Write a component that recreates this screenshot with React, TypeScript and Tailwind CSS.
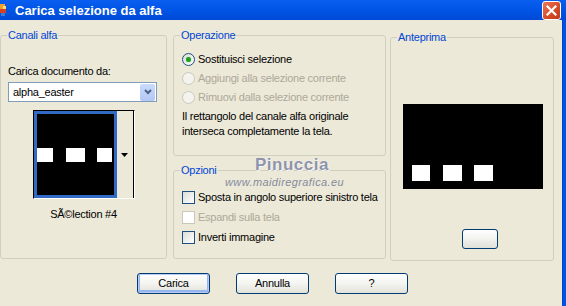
const font = "font-['Liberation_Sans','Arial',sans-serif]";

function GroupBox({
  label,
  className,
  children,
}: {
  label: string;
  className: string;
  children?: React.ReactNode;
}) {
  return (
    <div className={`rounded-[3px] border border-[#d0d0bf] ${className}`}>
      <span className="-mt-[8px] ml-[6px] block w-fit bg-[#ece9d8] px-[1px] text-[11px] leading-[14px] tracking-[-0.25px] text-[#0046d5]">
        {label}
      </span>
      {children}
    </div>
  );
}

function Radio({ label, checked, disabled }: { label: string; checked?: boolean; disabled?: boolean }) {
  return (
    <div className="flex h-[19px] items-center gap-[3px] pl-[8px]">
      <span
        className={`flex h-[13px] w-[13px] items-center justify-center rounded-full border ${
          disabled
            ? "border-[#cac8bb] bg-[#f4f3ee]"
            : "border-[#1c5180] bg-gradient-to-br from-[#dcdcd7] to-white"
        }`}
      >
        {checked && <span className="h-[5px] w-[5px] rounded-full bg-[#21a121] shadow-[0_0_1px_#5fd05f]" />}
      </span>
      <span className={disabled ? "text-[#aca899]" : "text-black"}>{label}</span>
    </div>
  );
}

function Check({ label, disabled }: { label: string; disabled?: boolean }) {
  return (
    <div className="flex h-[20px] items-center gap-[3px] pl-[8px]">
      <span
        className={`h-[13px] w-[13px] border ${
          disabled
            ? "border-[#cac8bb] bg-white"
            : "border-[#1c5180] bg-gradient-to-br from-[#dcdcd7] to-white"
        }`}
      />
      <span className={disabled ? "text-[#aca899]" : "text-black"}>{label}</span>
    </div>
  );
}

function Button({ label, isDefault }: { label: string; isDefault?: boolean }) {
  return (
    <button
      className={`flex h-[21px] w-[73px] items-center justify-center rounded-[3px] border border-[#003c74] bg-gradient-to-b from-white via-[#f4f4f0] to-[#e3e2da] text-[11px] text-black ${
        isDefault ? "shadow-[inset_0_0_0_1px_#b8ccf3,inset_0_-1px_0_2px_#94b5ef]" : ""
      }`}
    >
      {label}
    </button>
  );
}

export default function App() {
  return (
    <div className={`flex h-[306px] w-[566px] flex-col overflow-hidden bg-[#ece9d8] text-[11px] tracking-[-0.25px] ${font}`}>
      {/* Title bar */}
      <div className="flex h-[20px] items-center bg-gradient-to-b from-[#0a5ef0] via-[#0055e5] to-[#0049d6]">
        <svg width="8" height="14" viewBox="0 0 8 14" className="mr-[7px] shrink-0">
          <rect x="0" y="1" width="5" height="5" fill="#f0a030" />
          <rect x="0" y="6" width="6" height="4" fill="#d84020" />
          <rect x="1" y="10" width="4" height="3" fill="#3a7ad8" />
          <rect x="3" y="3" width="3" height="3" fill="#f6e070" />
        </svg>
        <span className="pt-[1px] text-[13px] font-bold tracking-normal text-white">Carica selezione da alfa</span>
        <div className="ml-auto mr-[5px] flex h-[19px] w-[19px] items-center justify-center rounded-[3px] border border-white bg-gradient-to-br from-[#e8795a] via-[#d9502a] to-[#c23a14]">
          <svg width="11" height="11" viewBox="0 0 11 11">
            <path d="M1.5 1.5 L9.5 9.5 M9.5 1.5 L1.5 9.5" stroke="white" strokeWidth="2.2" strokeLinecap="square" />
          </svg>
        </div>
      </div>

      <div className="flex flex-1">
        <div className="flex w-[562px] flex-col">
          <div className="flex items-start pt-[15px]">
            {/* Canali alfa */}
            <GroupBox label="Canali alfa" className="flex h-[224px] w-[167px] flex-col">
              <div className="mt-[22px] pl-[7px] leading-[14px]">Carica documento da:</div>
              <div className="ml-[7px] mt-[4px] flex h-[20px] w-[149px] items-center border border-[#7f9db9] bg-white">
                <span className="flex-1 pl-[4px]">alpha_easter</span>
                <span className="mr-[1px] flex h-[17px] w-[15px] items-center justify-center rounded-[2px] bg-gradient-to-b from-[#c9dafc] to-[#b4c8f6]">
                  <svg width="8" height="6" viewBox="0 0 8 6">
                    <path d="M1 1 L4 4 L7 1" stroke="#4d6185" strokeWidth="2" fill="none" />
                  </svg>
                </span>
              </div>
              <div className="mx-auto mt-[8px] flex h-[89px] w-[102px] border border-black border-b-white border-r-white bg-[#ece9d8]">
                <div className="flex w-[83px] items-center overflow-hidden border-[3px] border-[#316ac5] bg-black">
                  <span className="h-[14px] w-[16px] bg-white" />
                  <span className="ml-[13px] h-[14px] w-[19px] bg-white" />
                  <span className="ml-[12px] h-[14px] w-[15px] shrink-0 bg-white" />
                </div>
                <div className="flex flex-1 items-center justify-center border-r border-black">
                  <svg width="7" height="4" viewBox="0 0 7 4">
                    <path d="M0 0 H7 L3.5 4 Z" fill="black" />
                  </svg>
                </div>
              </div>
              <div className="mt-[8px] text-center leading-[14px]">SÃ©lection #4</div>
            </GroupBox>

            {/* Operazione / Opzioni */}
            <div className="relative ml-[6px] flex w-[213px] flex-col">
              <GroupBox label="Operazione" className="h-[121px]">
                <div className="mt-[8px]">
                  <Radio label="Sostituisci selezione" checked />
                  <Radio label="Aggiungi alla selezione corrente" disabled />
                  <Radio label="Rimuovi dalla selezione corrente" disabled />
                </div>
                <p className="mt-[2px] pl-[8px] leading-[15px]">
                  Il rettangolo del canale alfa originale
                  <br />
                  interseca completamente la tela.
                </p>
              </GroupBox>
              <GroupBox label="Opzioni" className="mt-[14px] h-[89px]">
                <div className="mt-[10px]">
                  <Check label="Sposta in angolo superiore sinistro tela" />
                  <Check label="Espandi sulla tela" disabled />
                  <Check label="Inverti immagine" />
                </div>
              </GroupBox>
              {/* watermark */}
              <span className="absolute left-[82px] top-[120px] text-[17px] font-bold leading-[20px] tracking-[0.5px] text-[#8e94aa] [text-shadow:0_0_1px_#fff,1px_1px_0_#f4f4f4]">
                Pinuccia
              </span>
              <span className="absolute left-[52px] top-[141px] text-[11px] italic leading-[12px] tracking-[0.4px] text-[#858a9c]">
                www.maidiregrafica.eu
              </span>
            </div>

            {/* Anteprima */}
            <GroupBox label="Anteprima" className="ml-[4px] mt-[2px] flex h-[224px] w-[164px] flex-col">
              <div className="ml-[12px] mt-[60px] flex h-[85px] w-[140px] items-end bg-black pb-[8px]">
                <span className="ml-[9px] h-[16px] w-[18px] bg-white" />
                <span className="ml-[13px] h-[16px] w-[19px] bg-white" />
                <span className="ml-[12px] h-[16px] w-[19px] bg-white" />
              </div>
              <div className="ml-[71px] mt-[40px] h-[20px] w-[36px] rounded-[3px] border border-[#003c74] bg-gradient-to-b from-white via-[#f2f2ee] to-[#e0dfd8]" />
            </GroupBox>
          </div>

          <div className="mt-[12px] flex gap-[26px] pl-[137px]">
            <Button label="Carica" isDefault />
            <Button label="Annulla" />
            <Button label="?" />
          </div>
        </div>
        <div className="flex-1 border-l border-[#0a3fc8] bg-[#0054e3]" />
      </div>
    </div>
  );
}
